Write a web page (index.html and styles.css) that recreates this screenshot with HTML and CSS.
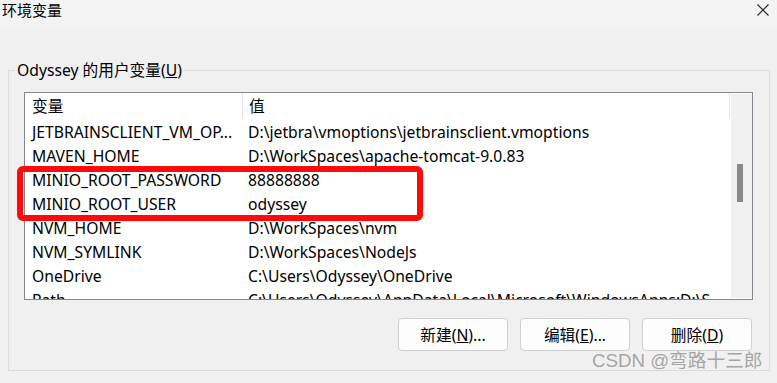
FILE: index.html
```html
<!DOCTYPE html>
<html lang="zh-CN">
<head>
    <meta charset="UTF-8">
    <title>环境变量</title>
    <link rel="stylesheet" href="styles.css">
</head>
<body>

<div class="titlebar">
    <span class="title">环境变量</span>
    <svg class="close" width="12" height="12" viewBox="0 0 12 12">
        <path d="M0.5 0.5 L11.5 11.5 M11.5 0.5 L0.5 11.5" stroke="#222" stroke-width="1.1" fill="none"/>
    </svg>
</div>

<div class="content">
    <fieldset class="group">
        <legend>Odyssey 的用户变量(<u>U</u>)</legend>

        <div class="list">
            <div class="table">
                <div class="row head">
                    <div class="col name">变量</div>
                    <div class="col value">值</div>
                </div>
                <div class="row"><div class="col name">JETBRAINSCLIENT_VM_OP...</div><div class="col value">D:\jetbra\vmoptions\jetbrainsclient.vmoptions</div></div>
                <div class="row"><div class="col name">MAVEN_HOME</div><div class="col value">D:\WorkSpaces\apache-tomcat-9.0.83</div></div>
                <div class="row"><div class="col name">MINIO_ROOT_PASSWORD</div><div class="col value">88888888</div></div>
                <div class="row"><div class="col name">MINIO_ROOT_USER</div><div class="col value">odyssey</div></div>
                <div class="row"><div class="col name">NVM_HOME</div><div class="col value">D:\WorkSpaces\nvm</div></div>
                <div class="row"><div class="col name">NVM_SYMLINK</div><div class="col value">D:\WorkSpaces\NodeJs</div></div>
                <div class="row"><div class="col name">OneDrive</div><div class="col value">C:\Users\Odyssey\OneDrive</div></div>
                <div class="row"><div class="col name">Path</div><div class="col value">C:\Users\Odyssey\AppData\Local\Microsoft\WindowsApps;D:\S</div></div>
            </div>
            <div class="scrollbar">
                <div class="thumb"></div>
            </div>
            <div class="mark"></div>
        </div>

        <div class="buttons">
            <button class="btn">新建(<u>N</u>)...</button>
            <button class="btn">编辑(<u>E</u>)...</button>
            <button class="btn">删除(<u>D</u>)</button>
        </div>
    </fieldset>

    <div class="watermark">CSDN @弯路十三郎</div>
</div>

</body>
</html>
```

FILE: styles.css
```css
body {
    margin: 0;
    padding: 0;
    width: 777px;
    height: 383px;
    overflow: hidden;
    background: #f0f0f0;
    font-family: "Noto Sans", "Noto Sans CJK SC", sans-serif;
    font-size: 15.7px;
    color: #000;
}
.titlebar {
    height: 28px;
    background: #f3f3f3;
    display: flex;
    justify-content: space-between;
    align-items: center;
    padding: 0 8px 0 2px;
}
.title {
    font-size: 15px;
    margin-top: -9px;
}
.close {
    margin-top: -8px;
}
.content {
    position: relative;
    padding: 33px 7px 0 8px;
}
.group {
    margin: 0;
    border: 1px solid #dcdcdc;
    padding: 13px 16px 19px 15px;
}
.group legend {
    padding: 0 2px;
    margin-left: -9px;
    line-height: 18px;
}
.list {
    position: relative;
    display: flex;
    height: 206px;
    border: 1px solid #828790;
    background: #fff;
}
.table {
    flex: 1;
    overflow: hidden;
}
.row {
    display: flex;
    height: 24px;
    align-items: center;
    white-space: nowrap;
}
.row.head {
    height: 27px;
    align-items: flex-start;
}
.col.name {
    width: 210px;
    padding-left: 7px;
    flex-shrink: 0;
}
.col.value {
    padding-left: 6px;
}
.row.head .col {
    height: 26px;
    line-height: 26px;
    border-right: 1px solid #e5e5e5;
}
.row.head .col.value {
    flex: 1;
    margin-right: 1px;
}
.mark {
    position: absolute;
    left: -8px;
    top: 73px;
    width: 394px;
    height: 43px;
    border: 6px solid #ff0a0a;
    border-radius: 6px;
}
.scrollbar {
    width: 21px;
    background: #f0f0f0;
    position: relative;
    margin: 1px 0;
}
.thumb {
    position: absolute;
    left: 6px;
    top: 70px;
    width: 6px;
    height: 38px;
    background: #898989;
}
.buttons {
    display: flex;
    justify-content: flex-end;
    gap: 12px;
    margin-top: 18px;
    margin-right: 1px;
}
.btn {
    width: 110px;
    height: 33px;
    background: #fdfdfd;
    border: 1px solid #d0d0d0;
    border-radius: 4px;
    font-family: inherit;
    font-size: 15.7px;
    color: #000;
    padding: 0;
}
.watermark {
    position: absolute;
    left: 592px;
    top: 322px;
    font-family: "Liberation Sans", "Noto Sans CJK SC", sans-serif;
    font-size: 18.7px;
    line-height: 22px;
    color: rgba(150, 150, 150, 0.85);
    white-space: nowrap;
}
```
